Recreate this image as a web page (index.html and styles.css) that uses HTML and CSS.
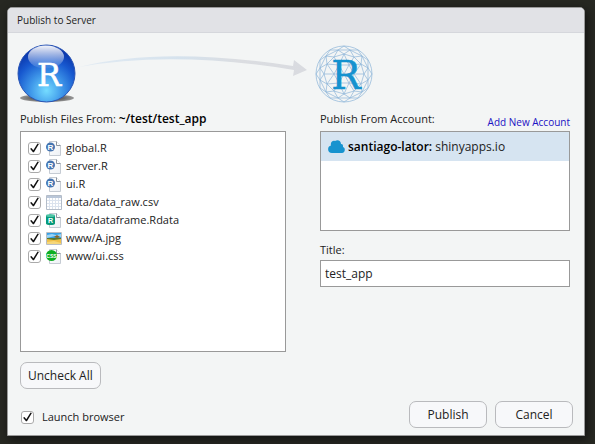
FILE: index.html
```html
<!DOCTYPE html>
<html lang="en">
<head>
<meta charset="utf-8">
<title>Publish to Server</title>
<link rel="stylesheet" href="styles.css">
</head>
<body>
<svg class="defs" aria-hidden="true">
  <defs>
    <linearGradient id="fold" x1="0" y1="0" x2="1" y2="1"><stop offset="0" stop-color="#fff"/><stop offset="1" stop-color="#eef1f5"/></linearGradient>
    <symbol id="page" viewBox="0 0 16 16">
      <path d="M3.500 1.500h7l4 4v10h-11z" fill="url(#fold)" stroke="#c5cbd3"/>
      <path d="M10.500 1.500v4h4" fill="#fff" stroke="#8d959f"/>
    </symbol>
    <symbol id="r-file" viewBox="0 0 16 16">
      <use href="#page"/>
      <circle cx="4.500" cy="7" r="4.500" fill="#4574b0"/>
      <text x="4.500" y="10" text-anchor="middle" font-family="Liberation Sans, sans-serif" font-weight="bold" font-size="8" fill="#fff">R</text>
    </symbol>
    <symbol id="csv-file" viewBox="0 0 16 16">
      <path d="M.5 1.500h15v14H.5z" fill="#fff" stroke="#b4bdc9"/>
      <path d="M1 2h14v2H1z" fill="#b9c6d8"/>
      <path d="M3.500 4v11M6.500 4v11M9.500 4v11M12.500 4v11M1 6.500h14M1 9.500h14M1 12.500h14" stroke="#dbe3ee" fill="none"/>
    </symbol>
    <symbol id="data-file" viewBox="0 0 16 16">
      <use href="#page"/>
      <path d="M0 3.500v8c0 2 9 2 9 0v-8z" fill="#069a7a"/>
      <ellipse cx="4.500" cy="3.500" rx="4.500" ry="1.500" fill="#4fc4a6"/>
      <text x="4.500" y="11" text-anchor="middle" font-family="Liberation Sans, sans-serif" font-weight="bold" font-size="7" fill="#fff">R</text>
    </symbol>
    <symbol id="image-file" viewBox="0 0 16 16">
      <path d="M.5 2.500h15v12H.5z" fill="#fff" stroke="#b9bec4"/>
      <path d="M1 3h14v5H1z" fill="#38a0e5"/>
      <path d="M1 5l5-1 4 1 5-1v3l-6-1-8 2z" fill="#9bd4f5"/>
      <path d="M1 8h14v6H1z" fill="#f0c04a"/>
      <path d="M1 8h14v1l-7 1-7-1z" fill="#58772d"/>
      <path d="M8 7l3-2 3 2-3 1z" fill="#8b6527"/>
      <path d="M1 12l7-1 7 2v1H1z" fill="#f6d77a"/>
    </symbol>
    <symbol id="css-file" viewBox="0 0 16 16">
      <use href="#page"/>
      <circle cx="5.500" cy="7.500" r="5.500" fill="#0cae22"/>
      <text x="5.500" y="9.500" text-anchor="middle" font-family="Liberation Sans, sans-serif" font-weight="bold" font-size="5" fill="#fff">CSS</text>
    </symbol>
  </defs>
</svg>

<main class="dialog" role="dialog" aria-labelledby="caption">
  <h1 class="caption" id="caption">Publish to Server</h1>
  <form class="content">
    <div class="columns banner">
      <div class="source">
        <svg class="logo" viewBox="0 0 60 60" aria-hidden="true">
          <defs>
            <radialGradient id="ball" cx=".5" cy=".8" r=".75">
              <stop offset="0" stop-color="#75dcff"/><stop offset=".35" stop-color="#429ceb"/><stop offset=".72" stop-color="#1758cf"/><stop offset="1" stop-color="#0a35aa"/>
            </radialGradient>
            <linearGradient id="gloss" x1="0" y1="0" x2="0" y2="1">
              <stop offset="0" stop-color="#fff" stop-opacity=".95"/><stop offset="1" stop-color="#fff" stop-opacity=".05"/>
            </linearGradient>
            <radialGradient id="shade"><stop offset=".6" stop-color="#666"/><stop offset="1" stop-color="#999"/></radialGradient>
          </defs>
          <ellipse cx="30" cy="54" rx="27" ry="4" fill="url(#shade)"/>
          <circle cx="29.500" cy="29.500" r="28.500" fill="url(#ball)" stroke="#2a55b5"/>
          <ellipse cx="29" cy="13" rx="18" ry="11.500" fill="url(#gloss)"/>
          <text x="32" y="42" text-anchor="middle" class="ball-letter">R</text>
        </svg>
        <svg class="arrow" viewBox="0 0 230 60" preserveAspectRatio="none" aria-hidden="true">
          <defs><linearGradient id="fade"><stop offset="0" stop-color="#e2ebf3"/><stop offset=".45" stop-color="#d5e2ed"/><stop offset=".7" stop-color="#dbdde1"/><stop offset="1" stop-color="#d9dbe0"/></linearGradient></defs>
          <path d="M2 23Q85 2 216 22l1-6 13 10-14 6 1-6Q95 6 2 23z" fill="url(#fade)"/>
        </svg>
      </div>
      <svg class="logo globe" viewBox="0 0 58 58" aria-hidden="true">
        <g fill="none" stroke="#8db4d9" stroke-width=".7">
          <circle cx="29" cy="29" r="28"/>
          <path d="M39 29L34 38 24 38 19 29 24 20 34 20zM19 29H39M24 20L34 38M34 20L24 38"/>
          <path d="M49 29L46 39 39 46 29 49 19 46 12 39 9 29 12 19 19 12 29 9 39 12 46 19z"/>
          <path d="M39 29L49 29M39 29L46 39 34 38 39 46M34 38L29 49 24 38 19 46M24 38L12 39 19 29 9 29M19 29L12 19 24 20 19 12M24 20L29 9 34 20 39 12M34 20L46 19 39 29"/>
          <path d="M53 35L47 47 35 53 23 53 11 47 5 35 5 23 11 11 23 5 35 5 47 11 53 23z"/>
          <path d="M49 29L53 35 46 39 47 47 39 46 35 53 29 49 23 53 19 46 11 47 12 39 5 35 9 29 5 23 12 19 11 11 19 12 23 5 29 9 35 5 39 12 47 11 46 19 53 23z"/>
          <path d="M57 29L53 35 53 43 47 47 43 53 35 53 29 57 23 53 15 53 11 47 5 43 5 35 1 29 5 23 5 15 11 11 15 5 23 5 29 1 35 5 43 5 47 11 53 15 53 23z"/>
        </g>
        <text x="31" y="44" text-anchor="middle" class="globe-letter">R</text>
      </svg>
    </div>

    <div class="columns">
      <section class="files">
        <h2 class="label">Publish Files From: <strong>~/test/test_app</strong></h2>
        <ul class="file-list">
          <li><label class="file"><input type="checkbox" checked><svg><use href="#r-file"/></svg>global.R</label></li>
          <li><label class="file"><input type="checkbox" checked><svg><use href="#r-file"/></svg>server.R</label></li>
          <li><label class="file"><input type="checkbox" checked><svg><use href="#r-file"/></svg>ui.R</label></li>
          <li><label class="file"><input type="checkbox" checked><svg><use href="#csv-file"/></svg>data/data_raw.csv</label></li>
          <li><label class="file"><input type="checkbox" checked><svg><use href="#data-file"/></svg>data/dataframe.Rdata</label></li>
          <li><label class="file"><input type="checkbox" checked><svg><use href="#image-file"/></svg>www/A.jpg</label></li>
          <li><label class="file"><input type="checkbox" checked><svg><use href="#css-file"/></svg>www/ui.css</label></li>
        </ul>
        <button class="button" type="button">Uncheck All</button>
      </section>

      <section class="target">
        <div class="account-head">
          <h2 class="label">Publish From Account:</h2>
          <a class="add" href="#">Add New Account</a>
        </div>
        <div class="accounts">
          <div class="account">
            <svg class="cloud" viewBox="0 0 17 13" aria-hidden="true"><path d="M4 13C-1 13-1 6 3 5.500 2 2 5 0 7 1c3-2 6 0 6 3 2 0 2 1 2 3 3 1 2 6-1 6z" fill="#1793cf"/></svg>
            <strong>santiago-lator:</strong><span>shinyapps.io</span>
          </div>
        </div>
        <label class="label title-label" for="title">Title:</label>
        <input class="title" id="title" type="text" value="test_app">
      </section>
    </div>

    <footer class="footer">
      <label class="launch"><input type="checkbox" checked>Launch browser</label>
      <div class="actions">
        <button class="button wide primary" type="submit">Publish</button>
        <button class="button wide" type="button">Cancel</button>
      </div>
    </footer>
  </form>
</main>
</body>
</html>
```
FILE: styles.css
```css
* {
  box-sizing: border-box;
}

body {
  margin: 0;
  padding: 7px 10px 9px 7px;
  background: #272822;
  color: #222;
  font: 11px/18px "Open Sans", "Noto Sans", sans-serif;
}

.defs {
  position: absolute;
  width: 0;
  height: 0;
}

.dialog {
  border: 1px solid #999;
  border-radius: 5px 5px 0 0;
  background: #f3f5f5;
  box-shadow: 2px 3px 10px #111;
  overflow: hidden;
}

.caption {
  margin: 0;
  padding: 4px 9px 3px;
  border-bottom: 1px solid #d5d7dc;
  background: #e1e2e6;
  font-size: 10px;
  line-height: 17px;
  font-weight: 400;
}

.content {
  padding: 11px 14px 7px 12px;
}

.columns {
  display: grid;
  grid-template-columns: 266fr 250fr;
  column-gap: 34px;
}

.banner {
  height: 66px;
}

.source {
  display: flex;
  margin: 0 -20px 0 -3px;
}

.logo {
  flex: none;
  width: 60px;
  height: 60px;
}

.arrow {
  flex: 1;
  min-width: 0;
  height: 60px;
}

.globe {
  width: 58px;
  height: 58px;
  margin: 1px 0 0 -6px;
}

.ball-letter,
.globe-letter {
  font-family: "DejaVu Serif", serif;
  stroke-width: 0.5px;
}

.ball-letter {
  font-size: 32px;
  fill: #fff;
  stroke: #fff;
}

.globe-letter {
  font-size: 39px;
  fill: #1592cf;
  stroke: #1592cf;
}

.label {
  margin: 0;
  height: 21px;
  font-size: 11px;
  line-height: 18px;
  font-weight: 400;
}

.label strong,
.account strong {
  font-size: 12px;
  font-weight: 600;
  color: #000;
}

.file-list {
  height: 221px;
  margin: 0 0 10px;
  padding: 7px;
  border: 1px solid #999;
  background: #fff;
  list-style: none;
}

.file {
  display: flex;
  align-items: center;
  height: 18px;
}

.file svg {
  width: 16px;
  height: 16px;
  margin: 0 4px 0 5px;
}

input[type="checkbox"] {
  appearance: none;
  flex: none;
  width: 13px;
  height: 13px;
  margin: 0;
  border: 1px solid #aaa;
  border-radius: 3px;
  background: #fff;
}

input[type="checkbox"]:checked::before {
  content: "";
  display: block;
  width: 11px;
  height: 11px;
  background: #111;
  clip-path: polygon(10% 57%, 22% 50%, 39% 70%, 78% 10%, 90% 14%, 45% 88%, 36% 88%);
}

.button {
  height: 27px;
  padding: 0 7px;
  border: 1px solid #b9babd;
  border-radius: 7px;
  background: #f7f8fa;
  color: #222;
  font: inherit;
  font-size: 12px;
}

.wide {
  width: 78px;
}

.primary {
  font-weight: 500;
}

.account-head {
  display: flex;
  justify-content: space-between;
}

.add {
  padding-top: 4px;
  color: #1c12c4;
  font-size: 10px;
  line-height: 16px;
  text-decoration: none;
}

.accounts {
  height: 100px;
  margin-bottom: 10px;
  border: 1px solid #999;
  background: #fff;
}

.account {
  display: flex;
  align-items: center;
  gap: 3px;
  height: 29px;
  padding: 0 7px;
  background: #d6e4f1;
  font-size: 12px;
}

.cloud {
  width: 17px;
  height: 13px;
}

.title-label {
  display: block;
  height: 19px;
}

.title {
  display: block;
  width: 100%;
  height: 27px;
  padding: 0 4px;
  border: 1px solid #999;
  background: #fff;
  color: #222;
  font: inherit;
  font-size: 12px;
}

.footer {
  display: flex;
  justify-content: space-between;
  align-items: flex-start;
  margin-top: 12px;
}

.launch {
  display: flex;
  align-items: center;
  gap: 8px;
  padding: 7px 1px 0;
}

.actions {
  display: flex;
  gap: 8px;
  margin-right: -3px;
}
```
